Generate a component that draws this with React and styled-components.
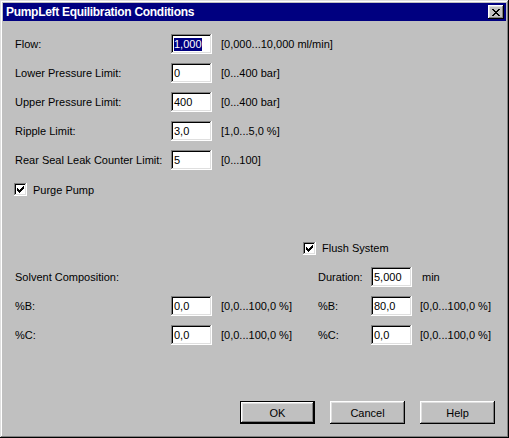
import React from 'react';
import styled, { createGlobalStyle } from 'styled-components';

const GlobalStyle = createGlobalStyle`
  html, body {
    margin: 0;
    padding: 0;
    background: #c0c0c0;
  }
  body {
    font-family: "Liberation Sans", Arial, sans-serif;
    font-size: 11px;
    color: #000;
  }
`;

const raised = `
  box-shadow: inset -1px -1px #000, inset 1px 1px #fff,
    inset -2px -2px #808080, inset 2px 2px #dfdfdf;
`;

const sunken = `
  box-shadow: inset -1px -1px #fff, inset 1px 1px #808080,
    inset -2px -2px #dfdfdf, inset 2px 2px #000;
`;

const Dialog = styled.div`
  box-sizing: border-box;
  width: 509px;
  height: 438px;
  padding: 3px;
  display: flex;
  flex-direction: column;
  background: #c0c0c0;
  box-shadow: inset -1px -1px #000, inset 1px 1px #dfdfdf,
    inset -2px -2px #808080, inset 2px 2px #fff;
`;

const TitleBar = styled.div`
  height: 18px;
  display: flex;
  align-items: center;
  justify-content: space-between;
  padding: 0 2px 0 3px;
  background: #000080;
  color: #fff;
`;

const Title = styled.span`
  font-weight: bold;
  font-size: 12px;
  letter-spacing: -0.3px;
`;

const CloseButton = styled.div`
  width: 16px;
  height: 14px;
  display: flex;
  align-items: center;
  justify-content: center;
  background: #c0c0c0;
  ${raised}
`;

const Body = styled.div`
  flex: 1;
  display: flex;
  flex-direction: column;
  padding: 12px 11px 11px 12px;
`;

const FieldGrid = styled.div`
  display: grid;
  grid-template-columns: 156px 41px auto;
  grid-auto-rows: 20px;
  row-gap: 9px;
  align-items: center;
  margin-top: 1px;
`;

const LowerGrid = styled.div`
  display: grid;
  grid-template-columns: 156px 41px 91px 68px 41px auto;
  grid-auto-rows: 20px;
  row-gap: 9px;
  align-items: center;
  margin-top: 42px;
`;

const Label = styled.span`
  white-space: nowrap;
  padding-left: ${({ $indent }) => $indent || 0}px;
  grid-column: ${({ $col }) => $col || 'auto'};
`;

const Hint = styled.span`
  white-space: nowrap;
  padding-left: ${({ $pad }) => ($pad === undefined ? 9 : $pad)}px;
`;

const TextBox = styled.div`
  box-sizing: border-box;
  width: 41px;
  height: 20px;
  padding: 0 2px 0 3px;
  display: flex;
  align-items: center;
  background: #fff;
  white-space: nowrap;
  overflow: hidden;
  ${sunken}
`;

const Selected = styled.span`
  background: #000080;
  color: #fff;
  line-height: 13px;
`;

const CheckRow = styled.div`
  display: flex;
  align-items: center;
  gap: 6px;
  grid-column: ${({ $col }) => $col || 'auto'};
`;

const CheckBox = styled.span`
  width: 13px;
  height: 13px;
  flex: none;
  background: #fff;
  ${sunken}
  svg {
    display: block;
  }
`;

const PurgeRow = styled(CheckRow)`
  margin-top: 13px;
  margin-left: -1px;
`;

const ButtonBar = styled.div`
  margin-top: auto;
  display: flex;
  justify-content: flex-end;
  gap: 15px;
`;

const Button = styled.div`
  box-sizing: border-box;
  width: 75px;
  height: 23px;
  display: flex;
  align-items: center;
  justify-content: center;
  background: #c0c0c0;
  ${({ $default }) =>
    $default
      ? `box-shadow: inset 0 0 0 1px #000, inset -2px -2px #000, inset 2px 2px #fff,
    inset -3px -3px #808080, inset 3px 3px #dfdfdf;`
      : raised}
`;

const checkPixels = [
  '......#',
  '.....##',
  '#...###',
  '##.###.',
  '#####..',
  '.###...',
  '..#....',
];

const closePixels = [
  '##....##',
  '.##..##.',
  '..####..',
  '...##...',
  '..####..',
  '.##..##.',
  '##....##',
];

const PixelGlyph = ({ rows, x, y, w, h }) => (
  <svg width={w} height={h} viewBox={`0 0 ${w} ${h}`} shapeRendering="crispEdges">
    {rows.flatMap((row, r) =>
      row.split('').map((c, i) =>
        c === '#' ? <rect key={`${r}-${i}`} x={x + i} y={y + r} width="1" height="1" fill="#000" /> : null
      )
    )}
  </svg>
);

const CheckMark = () => (
  <CheckBox>
    <PixelGlyph rows={checkPixels} x={3} y={3} w={13} h={13} />
  </CheckBox>
);

const fields = [
  { label: 'Flow:', value: '1,000', hint: '[0,000...10,000 ml/min]', selected: true },
  { label: 'Lower Pressure Limit:', value: '0', hint: '[0...400 bar]' },
  { label: 'Upper Pressure Limit:', value: '400', hint: '[0...400 bar]' },
  { label: 'Ripple Limit:', value: '3,0', hint: '[1,0...5,0 %]' },
  { label: 'Rear Seal Leak Counter Limit:', value: '5', hint: '[0...100]' },
];

export default function App() {
  return (
    <>
      <GlobalStyle />
      <Dialog>
        <TitleBar>
          <Title>PumpLeft Equilibration Conditions</Title>
          <CloseButton>
            <PixelGlyph rows={closePixels} x={0} y={0} w={8} h={7} />
          </CloseButton>
        </TitleBar>
        <Body>
          <FieldGrid>
            {fields.map((f) => (
              <React.Fragment key={f.label}>
                <Label>{f.label}</Label>
                <TextBox>{f.selected ? <Selected>{f.value}</Selected> : f.value}</TextBox>
                <Hint>{f.hint}</Hint>
              </React.Fragment>
            ))}
          </FieldGrid>

          <PurgeRow>
            <CheckMark />
            Purge Pump
          </PurgeRow>

          <LowerGrid>
            <CheckRow $col="4 / 7">
              <CheckMark />
              Flush System
            </CheckRow>

            <Label $col="1 / 4">Solvent Composition:</Label>
            <Label $indent={15}>Duration:</Label>
            <TextBox>5,000</TextBox>
            <Hint $pad={10}>min</Hint>

            <Label>%B:</Label>
            <TextBox>0,0</TextBox>
            <Hint>[0,0...100,0 %]</Hint>
            <Label $indent={15}>%B:</Label>
            <TextBox>80,0</TextBox>
            <Hint $pad={8}>[0,0...100,0 %]</Hint>

            <Label>%C:</Label>
            <TextBox>0,0</TextBox>
            <Hint>[0,0...100,0 %]</Hint>
            <Label $indent={15}>%C:</Label>
            <TextBox>0,0</TextBox>
            <Hint $pad={8}>[0,0...100,0 %]</Hint>
          </LowerGrid>

          <ButtonBar>
            <Button $default>OK</Button>
            <Button>Cancel</Button>
            <Button>Help</Button>
          </ButtonBar>
        </Body>
      </Dialog>
    </>
  );
}
